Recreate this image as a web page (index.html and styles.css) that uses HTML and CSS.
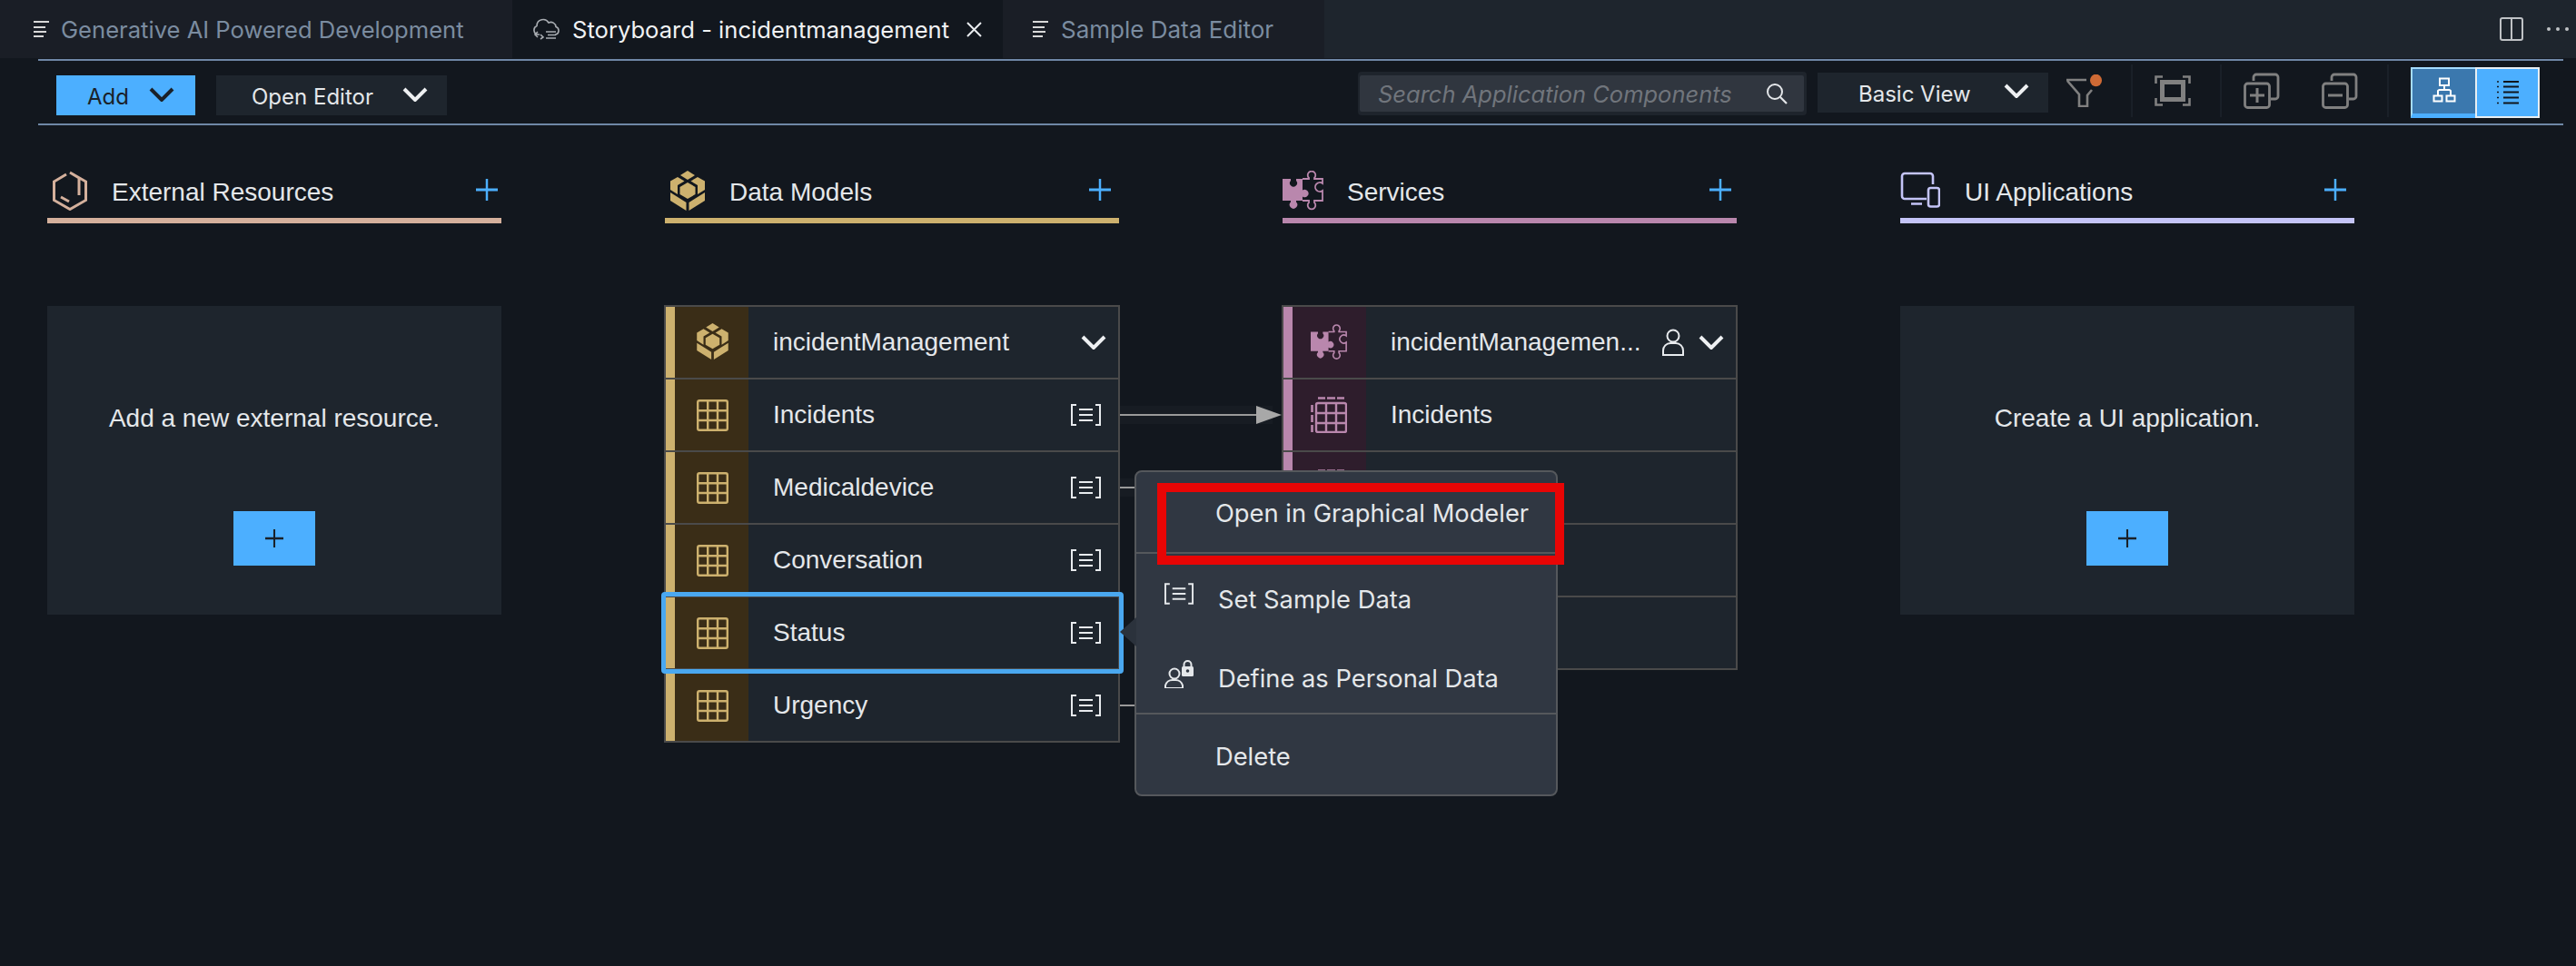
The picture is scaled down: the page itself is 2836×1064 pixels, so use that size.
FILE: index.html
```html
<!DOCTYPE html>
<html>
<head>
    <title>Storyboard - incidentmanagement</title>
    <meta charset="UTF-8">
    <link rel="stylesheet" href="styles.css">
</head>
<body>
    <svg class="defs" width="0" height="0">
        <symbol id="chevron" viewBox="0 0 28 16"><path d="M2 2L14 14L26 2" fill="none" stroke="currentColor" stroke-width="4"/></symbol>
        <symbol id="lines" viewBox="0 0 17 18"><path d="M0 1H17M0 7H13M0 12H14M0 17H11" fill="none" stroke="currentColor" stroke-width="2"/></symbol>
        <symbol id="grid" viewBox="0 0 35 35"><path d="M3 1.2H32A1.8 1.8 0 0 1 33.8 3V32A1.8 1.8 0 0 1 32 33.8H3A1.8 1.8 0 0 1 1.2 32V3A1.8 1.8 0 0 1 3 1.2ZM12.2 1V34M23 1V34M1 12.2H34M1 23H34" fill="none" stroke="#cdb16e" stroke-width="2.4"/></symbol>
        <symbol id="doc" viewBox="0 0 33 24"><path d="M6 1H1V23H6M27 1H32V23H27M9 6H24M9 12H24M9 18H24" fill="none" stroke="currentColor" stroke-width="2"/></symbol>
        <symbol id="cube" viewBox="0 0 38 44"><g fill="#cdb16e"><polygon points="19,0 27,5 19,10 11,5"/><polygon points="0,11.5 8,7 15.5,11.5 8,16 8,26 0,21"/><polygon points="38,11.5 30,7 22.5,11.5 30,16 30,26 38,21"/><polygon points="19,13 27.5,18 27.5,26 19,31 10.5,26 10.5,18"/><polygon points="0,24 8,29 17.5,35 17.5,44 0,33"/><polygon points="38,24 30,29 20.5,35 20.5,44 38,33"/></g></symbol>
        <symbol id="puzzle" viewBox="0 0 45 44"><path d="M0 9H9V11A4 4 0 1 0 15 11V9H22V21.500A4.200 4.200 0 1 1 22 28.500V33H15V34.500A4.200 4.200 0 1 1 9 34.500V33H0Z" fill="#b987ad"/><path d="M22 9H29V8A4.300 4.300 0 1 1 35 8V9H44V14A5 5 0 1 0 44 22V33H35V35A4.300 4.300 0 1 1 29 35V33H22" fill="none" stroke="#b987ad" stroke-width="1.800"/></symbol>
        <symbol id="dgrid" viewBox="0 0 40 40"><path d="M8 7H37A2 2 0 0 1 39 9V37A2 2 0 0 1 37 39H8A2 2 0 0 1 6 37V9A2 2 0 0 1 8 7ZM17 7V39M28 7V39M6 18H39M6 29H39" fill="none" stroke="#b987ad" stroke-width="2.4"/><path d="M8 1.5H16M18 1.5H27M29 1.5H37M1.5 9V17M1.5 20V28M1.5 31V39" fill="none" stroke="#b987ad" stroke-width="2.6"/></symbol>
        <symbol id="plus" viewBox="0 0 24 24"><path d="M12 0V24" fill="none" stroke="currentColor" stroke-width="2.5"/><path d="M0 12H24" fill="none" stroke="currentColor" stroke-width="3"/></symbol>
    </svg>

    <div class="tabs">
        <div class="tab tab-one">
            <svg class="tab-icon"><use href="#lines"/></svg>
            <span>Generative AI Powered Development</span>
        </div>
        <div class="tab tab-two">
            <svg class="cloud-icon" viewBox="0 0 31 24"><path d="M8 18H6A5 5 0 0 1 5 8.5A7 7 0 0 1 18 5A5.5 5.5 0 0 1 26 9.5A4.5 4.5 0 0 1 26 18H25M6 15L3 18L6 21M15 15H26M17 18.500H26M15 22H26M9 18L12 21L9 23" fill="none" stroke="#a9adb2" stroke-width="1.6"/></svg>
            <span>Storyboard - incidentmanagement</span>
            <svg class="close-icon" viewBox="0 0 17 17"><path d="M1 1L16 16M16 1L1 16" fill="none" stroke="#e8ebee" stroke-width="2"/></svg>
        </div>
        <div class="tab tab-three">
            <svg class="tab-icon"><use href="#lines"/></svg>
            <span>Sample Data Editor</span>
        </div>
        <div class="tab-actions">
            <svg class="split-icon" viewBox="0 0 26 26"><path d="M3 1H23A2 2 0 0 1 25 3V23A2 2 0 0 1 23 25H3A2 2 0 0 1 1 23V3A2 2 0 0 1 3 1ZM13 1V25" fill="none" stroke="#bfc2c5" stroke-width="2"/></svg>
            <div class="dots"><i></i><i></i><i></i></div>
        </div>
    </div>

    <div class="toolbar">
        <div class="drop drop-add">
            <span>Add</span>
            <svg class="chevron"><use href="#chevron"/></svg>
        </div>
        <div class="drop drop-editor">
            <span>Open Editor</span>
            <svg class="chevron"><use href="#chevron"/></svg>
        </div>
        <div class="search">
            <div class="search-inner">
                <span>Search Application Components</span>
                <svg class="search-icon" viewBox="0 0 24 24"><circle cx="10" cy="10" r="8" fill="none" stroke="#e4e7ea" stroke-width="2"/><path d="M16 16L23 23" stroke="#e4e7ea" stroke-width="2.2"/></svg>
            </div>
        </div>
        <div class="drop drop-view">
            <span>Basic View</span>
            <svg class="chevron"><use href="#chevron"/></svg>
        </div>
        <svg class="funnel" viewBox="0 0 40 36"><path d="M1 6H23M2 7L15 22V35H24V23L29 17" fill="none" stroke="#808080" stroke-width="2.6"/><ellipse cx="33.500" cy="6.500" rx="6.500" ry="6.800" fill="#cf6a35"/></svg>
        <div class="sep sep-one"></div>
        <svg class="fit" viewBox="0 0 40 34"><path d="M1.500 9V1.500H9M31 1.500H38.500V9M1.500 25V32.500H9M31 32.500H38.500V25" fill="none" stroke="#808080" stroke-width="2.600"/><rect x="8.500" y="7.500" width="23" height="19" fill="none" stroke="#808080" stroke-width="5"/></svg>
        <div class="sep sep-two"></div>
        <svg class="stack" viewBox="0 0 40 40"><path d="M11 9V5A3 3 0 0 1 14 2H35A3 3 0 0 1 38 5V26A3 3 0 0 1 35 29H30" fill="none" stroke="#808080" stroke-width="2.800"/><rect x="1.500" y="12" width="27" height="26.500" rx="3" fill="none" stroke="#808080" stroke-width="2.800"/><path d="M7 25H23M15 17V33" stroke="#808080" stroke-width="3"/></svg>
        <svg class="stack stack-minus" viewBox="0 0 40 40"><path d="M11 9V5A3 3 0 0 1 14 2H35A3 3 0 0 1 38 5V26A3 3 0 0 1 35 29H30" fill="none" stroke="#808080" stroke-width="2.800"/><rect x="1.500" y="12" width="27" height="26.500" rx="3" fill="none" stroke="#808080" stroke-width="2.800"/><path d="M7 25H23" stroke="#808080" stroke-width="3"/></svg>
        <div class="sep sep-three"></div>
        <div class="toggle">
            <div class="toggle-btn toggle-left">
                <svg viewBox="0 0 26 30" width="26" height="30"><path d="M8 1.500H18V9H8ZM13 9V13M6 20V15A2 2 0 0 1 8 14H18A2 2 0 0 1 20 15V20M1.500 20.500H10.500V26.500H1.500ZM15.500 20.500H24.500V26.500H15.500Z" fill="none" stroke="#fff" stroke-width="2"/></svg>
            </div>
            <div class="toggle-btn toggle-right">
                <svg viewBox="0 0 24 28" width="24" height="28"><path d="M7 2H24M7 7.500H24M7 13.500H24M7 19.500H24M7 25.500H24" fill="none" stroke="#11161c" stroke-width="2.200"/><path d="M0 2H2M0 7.500H2M0 13.500H2M0 19.500H2M0 25.500H2" stroke="#11161c" stroke-width="1.500"/></svg>
            </div>
        </div>
    </div>

    <div class="board">
        <section class="column">
            <div class="col-head head-external">
                <svg class="head-icon" viewBox="0 0 38 44"><path d="M15 4L1.500 12V32.500L19 42.500L36.500 32.500V12L19 2L29 8V27M9 29L18 34" fill="none" stroke="#d4b09c" stroke-width="3"/></svg>
                <h2>External Resources</h2>
                <svg class="head-add"><use href="#plus"/></svg>
            </div>
            <div class="empty">
                <p>Add a new external resource.</p>
                <div class="empty-btn"><svg><use href="#plus"/></svg></div>
            </div>
        </section>

        <section class="column">
            <div class="col-head head-data">
                <svg class="head-icon"><use href="#cube"/></svg>
                <h2>Data Models</h2>
                <svg class="head-add"><use href="#plus"/></svg>
            </div>
            <div class="table table-data">
                <div class="row">
                    <div class="row-icon"><svg class="icon-cube"><use href="#cube"/></svg></div>
                    <span class="row-name">incidentManagement</span>
                    <svg class="chevron row-chevron"><use href="#chevron"/></svg>
                </div>
                <div class="row">
                    <div class="row-icon"><svg class="icon-grid"><use href="#grid"/></svg></div>
                    <span class="row-name">Incidents</span>
                    <svg class="row-doc"><use href="#doc"/></svg>
                </div>
                <div class="row">
                    <div class="row-icon"><svg class="icon-grid"><use href="#grid"/></svg></div>
                    <span class="row-name">Medicaldevice</span>
                    <svg class="row-doc"><use href="#doc"/></svg>
                </div>
                <div class="row">
                    <div class="row-icon"><svg class="icon-grid"><use href="#grid"/></svg></div>
                    <span class="row-name">Conversation</span>
                    <svg class="row-doc"><use href="#doc"/></svg>
                </div>
                <div class="row row-selected">
                    <div class="row-icon"><svg class="icon-grid"><use href="#grid"/></svg></div>
                    <span class="row-name">Status</span>
                    <svg class="row-doc"><use href="#doc"/></svg>
                </div>
                <div class="row">
                    <div class="row-icon"><svg class="icon-grid"><use href="#grid"/></svg></div>
                    <span class="row-name">Urgency</span>
                    <svg class="row-doc"><use href="#doc"/></svg>
                </div>
            </div>
        </section>

        <section class="column">
            <div class="col-head head-services">
                <svg class="head-icon"><use href="#puzzle"/></svg>
                <h2>Services</h2>
                <svg class="head-add"><use href="#plus"/></svg>
            </div>
            <div class="table table-services">
                <div class="row">
                    <div class="row-icon"><svg class="icon-puzzle"><use href="#puzzle"/></svg></div>
                    <span class="row-name">incidentManagemen...</span>
                    <svg class="row-user" viewBox="0 0 24 30"><circle cx="12" cy="8" r="6.500" fill="none" stroke="#e8ebee" stroke-width="2"/><path d="M1 29V24A8 8 0 0 1 9 16H15A8 8 0 0 1 23 24V29Z" fill="none" stroke="#e8ebee" stroke-width="2"/></svg>
                    <svg class="chevron row-chevron"><use href="#chevron"/></svg>
                </div>
                <div class="row">
                    <div class="row-icon"><svg class="icon-dgrid"><use href="#dgrid"/></svg></div>
                    <span class="row-name">Incidents</span>
                </div>
                <div class="row">
                    <div class="row-icon"><svg class="icon-dgrid"><use href="#dgrid"/></svg></div>
                </div>
                <div class="row">
                    <div class="row-icon"><svg class="icon-dgrid"><use href="#dgrid"/></svg></div>
                </div>
                <div class="row">
                    <div class="row-icon"><svg class="icon-dgrid"><use href="#dgrid"/></svg></div>
                </div>
            </div>
        </section>

        <section class="column">
            <div class="col-head head-ui">
                <svg class="head-icon" viewBox="0 0 44 40"><path d="M29 30H5A3 3 0 0 1 2 27V5A3 3 0 0 1 5 2H33A3 3 0 0 1 36 5V14M12 35.500H24" fill="none" stroke="#c4c4f7" stroke-width="2.600"/><rect x="31" y="18" width="12" height="20.500" rx="2.500" fill="none" stroke="#c4c4f7" stroke-width="2.600"/></svg>
                <h2>UI Applications</h2>
                <svg class="head-add"><use href="#plus"/></svg>
            </div>
            <div class="empty">
                <p>Create a UI application.</p>
                <div class="empty-btn"><svg><use href="#plus"/></svg></div>
            </div>
        </section>

        <svg class="links" width="180" height="340" viewBox="0 0 180 340">
            <rect x="0" y="7" width="168" height="20" fill="#171c23"/>
            <rect x="0" y="87" width="20" height="20" fill="#171c23"/>
            <path d="M0 17H152M0 97H20M0 337H20" fill="none" stroke="#9a9a9a" stroke-width="2"/>
            <polygon points="150,7 178,17 150,27" fill="#a8a8a8"/>
        </svg>

        <div class="menu">
            <div class="menu-item menu-first">Open in Graphical Modeler</div>
            <div class="menu-item menu-icon-item">
                <svg class="menu-icon"><use href="#doc"/></svg>
                <span>Set Sample Data</span>
            </div>
            <div class="menu-item menu-icon-item menu-last-group">
                <svg class="menu-icon menu-lock" viewBox="0 0 32 31"><circle cx="11" cy="15" r="5.500" fill="none" stroke="#e4e7ea" stroke-width="2"/><path d="M1 31V28A8 8 0 0 1 9 22H12A8 8 0 0 1 20 28V31Z" fill="none" stroke="#e4e7ea" stroke-width="2"/><rect x="19" y="7" width="13" height="11" rx="1.500" fill="#e4e7ea"/><path d="M21.500 8V5A4 4 0 0 1 29.500 5V8" fill="none" stroke="#e4e7ea" stroke-width="2"/><circle cx="25.500" cy="12" r="1.800" fill="#303742"/></svg>
                <span>Define as Personal Data</span>
            </div>
            <div class="menu-item menu-delete">Delete</div>
        </div>

        <div class="callout"></div>
    </div>
</body>
</html>
```
FILE: styles.css
```css
html, body {
    margin: 0;
    padding: 0;
    height: 100%;
    background: #12171e;
    overflow: hidden;
}

body {
    color: #e4e7ea;
    font-family: Inter, "Noto Sans", sans-serif;
}

.defs {
    position: absolute;
}

/* tab strip */
.tabs {
    display: flex;
    height: 64px;
    background: #1e252d;
    font-size: 25.6px;
}

.tab {
    display: flex;
    align-items: center;
    box-sizing: border-box;
    height: 64px;
    color: #7b8ca0;
    background: #1a1e26;
}

.tab-one {
    width: 564px;
    padding-left: 37px;
}

.tab-two {
    width: 540px;
    padding-left: 22px;
    color: #f0f2f4;
    background: #12171e;
}

.tab-three {
    width: 354px;
    padding-left: 33px;
    font-size: 26px;
}

.tab-three .tab-icon {
    margin-right: 14px;
}

.tab-icon {
    width: 17px;
    height: 18px;
    margin-right: 13px;
    color: #d8d8d8;
}

.cloud-icon {
    width: 31px;
    height: 24px;
    margin-right: 13px;
}

.close-icon {
    width: 17px;
    height: 17px;
    margin-left: 19px;
}

.tab-actions {
    display: flex;
    align-items: center;
    margin-left: auto;
    padding-right: 8px;
}

.split-icon {
    width: 26px;
    height: 26px;
    margin-right: 26px;
}

.dots {
    display: flex;
    gap: 6px;
}

.dots i {
    width: 4px;
    height: 4px;
    border-radius: 50%;
    background: #bfc2c5;
}

/* toolbar */
.toolbar {
    display: flex;
    align-items: center;
    box-sizing: border-box;
    height: 73px;
    margin: 1px 14px 0 42px;
    padding-left: 20px;
    border-top: 2px solid #6f87a6;
    border-bottom: 2px solid #6f87a6;
    font-size: 24px;
}

.drop {
    display: flex;
    align-items: flex-start;
    box-sizing: border-box;
    height: 44px;
    margin-top: 7px;
    background: #1e252d;
}

.drop span {
    margin-top: 9px;
}

.chevron {
    width: 28px;
    height: 16px;
    color: #eef0f2;
}

.drop-add {
    width: 153px;
    padding-left: 34px;
    background: #4cafff;
    color: #1a2129;
}

.drop-add .chevron {
    margin: 13px 0 0 22px;
    color: #1a2129;
}

.drop-editor {
    width: 254px;
    margin-left: 23px;
    padding-left: 39px;
}

.drop-editor .chevron {
    margin: 13px 0 0 32px;
}

.search {
    box-sizing: border-box;
    width: 494px;
    height: 48px;
    margin-top: 3px;
    margin-left: 1003px;
    padding: 4px 3px 4px 2px;
    background: #1e242c;
    border-radius: 4px;
}

.search-inner {
    display: flex;
    align-items: center;
    height: 40px;
    padding-left: 20px;
    background: #30363f;
    color: #70757c;
    font-style: italic;
    font-size: 25.5px;
    border-radius: 2px;
}

.search-icon {
    width: 24px;
    height: 24px;
    margin-left: auto;
    margin-right: 18px;
}

.drop-view {
    width: 254px;
    margin-top: 1px;
    margin-left: 12px;
    padding-left: 45px;
}

.drop-view .chevron {
    margin: 12px 0 0 36px;
}

.funnel {
    width: 40px;
    height: 36px;
    margin-left: 19px;
    margin-bottom: 3px;
}

.sep {
    width: 2px;
    height: 58px;
    margin-bottom: 3px;
    background: #1a2028;
}

.sep-one {
    margin-left: 32px;
}

.fit {
    width: 40px;
    height: 34px;
    margin-left: 24px;
    margin-bottom: 3px;
}

.sep-two {
    margin-left: 32px;
}

.stack {
    width: 40px;
    height: 40px;
    margin-left: 24px;
    margin-bottom: 3px;
}

.stack-minus {
    margin-left: 46px;
}

.sep-three {
    margin-left: 32px;
}

.toggle {
    display: flex;
    margin-left: 24px;
    height: 56px;
}

.toggle-btn {
    display: flex;
    align-items: center;
    justify-content: center;
    box-sizing: border-box;
    height: 56px;
}

.toggle-left {
    width: 71px;
    background: #3b78ae;
    border: 2px solid #a5dcff;
    border-right: 0;
    border-bottom: 5px solid #4cafff;
}

.toggle-right {
    width: 71px;
    background: #4cafff;
    border: 2px solid #e8eef2;
}

/* board */
.board {
    position: relative;
    display: grid;
    grid-template-columns: repeat(4, 500px);
    gap: 180px;
    padding-left: 52px;
    font-family: "Liberation Sans", Arial, sans-serif;
}

.col-head {
    display: flex;
    align-items: center;
    box-sizing: border-box;
    height: 108px;
    padding-top: 48px;
    border-bottom: 6px solid;
}

.head-external { border-color: #d4b09c; }
.head-data { border-color: #cdb16e; }
.head-services { border-color: #b987ad; }
.head-ui { border-color: #c4c4f7; }

.col-head h2 {
    flex: 1;
    margin: 0 0 2px 27px;
    font-size: 28px;
    font-weight: normal;
    line-height: 34px;
}

.head-icon {
    flex: none;
    width: 38px;
    height: 44px;
    margin-left: 6px;
    margin-bottom: 6px;
}

.head-services .head-icon {
    width: 45px;
    margin-left: 0;
    margin-right: -1px;
}

.head-ui .head-icon {
    width: 44px;
    height: 40px;
    margin-left: 0;
    margin-bottom: 8px;
}

.head-add {
    width: 24px;
    height: 24px;
    margin-right: 4px;
    margin-bottom: 8px;
    color: #4cafff;
}

.head-data .head-add,
.head-ui .head-add {
    margin-right: 9px;
}

.head-services .head-add {
    margin-right: 6px;
}

.empty {
    box-sizing: border-box;
    height: 340px;
    margin-top: 91px;
    padding-top: 107px;
    background: #1e252d;
    text-align: center;
    font-size: 28px;
}

.empty p {
    margin: 0;
    line-height: 34px;
}

.empty-btn {
    display: flex;
    align-items: center;
    justify-content: center;
    width: 90px;
    height: 60px;
    margin: 85px auto 0;
    background: #4cafff;
    color: #1a2129;
}

.empty-btn svg {
    width: 20px;
    height: 20px;
}

.table {
    margin: 90px -1px 0;
    border: 2px solid #4a4a4a;
    font-size: 28px;
}

.row {
    position: relative;
    display: flex;
    align-items: center;
    box-sizing: border-box;
    height: 80px;
    background: #1e252d;
    border-bottom: 2px solid #4a4a4a;
}

.row:last-child {
    height: 78px;
    border-bottom: 0;
}

.row-icon {
    display: flex;
    align-items: center;
    justify-content: center;
    box-sizing: border-box;
    align-self: stretch;
    flex: none;
    width: 91px;
    border-left: 10px solid;
}

.table-data .row-icon {
    padding-left: 2px;
    border-color: #cdb16e;
    background: #3a2d17;
}

.table-services .row-icon {
    padding-right: 2px;
    border-color: #b987ad;
    background: #2e1d2c;
}

.icon-grid {
    width: 35px;
    height: 35px;
}

.icon-cube {
    width: 35px;
    height: 40px;
    margin-bottom: 2px;
}

.icon-puzzle {
    width: 40px;
    height: 40px;
}

.icon-dgrid {
    width: 40px;
    height: 40px;
}

.row-name {
    flex: 1;
    margin-left: 27px;
}

.row-doc {
    width: 33px;
    height: 24px;
    margin-right: 19px;
    color: #e8ebee;
}

.row-chevron {
    margin-right: 13px;
}

.row-user {
    width: 24px;
    height: 30px;
    margin-right: 16px;
}

.row-selected {
    z-index: 1;
}

.row-selected::after {
    content: "";
    position: absolute;
    top: -6px;
    right: -6px;
    bottom: -6px;
    left: -5px;
    border: 5px solid #4aa8f0;
    border-radius: 4px;
}

/* overlays */
.links {
    position: absolute;
    left: 1233px;
    top: 302px;
}

.menu {
    position: absolute;
    z-index: 2;
    left: 1249px;
    top: 380px;
    box-sizing: border-box;
    width: 466px;
    height: 359px;
    background: #303742;
    border: 2px solid #55585c;
    border-radius: 8px;
    font-family: Inter, "Noto Sans", sans-serif;
    font-size: 27.3px;
    line-height: 34px;
}

.menu::before {
    content: "";
    position: absolute;
    left: -18px;
    top: 160px;
    width: 18px;
    height: 32px;
    background: #2b323c;
    clip-path: polygon(0 50%, 100% 0, 100% 100%);
}

.menu-first {
    box-sizing: border-box;
    height: 90px;
    padding: 29px 0 0 87px;
    border-bottom: 2px solid #55585c;
}

.menu-icon-item {
    position: relative;
    display: flex;
    box-sizing: border-box;
    height: 88px;
    padding: 34px 0 0 31px;
    gap: 27px;
}

.menu-last-group {
    height: 89px;
    padding-top: 33px;
    border-bottom: 2px solid #55585c;
}

.menu-icon {
    flex: none;
    width: 32px;
    height: 24px;
    margin-top: -2px;
    color: #e4e7ea;
}

.menu-lock {
    height: 31px;
    margin-top: -4px;
}

.menu-delete {
    padding: 30px 0 0 87px;
}

.callout {
    position: absolute;
    z-index: 3;
    left: 1274px;
    top: 394px;
    box-sizing: border-box;
    width: 448px;
    height: 90px;
    border: 10px solid #e80505;
}
```
